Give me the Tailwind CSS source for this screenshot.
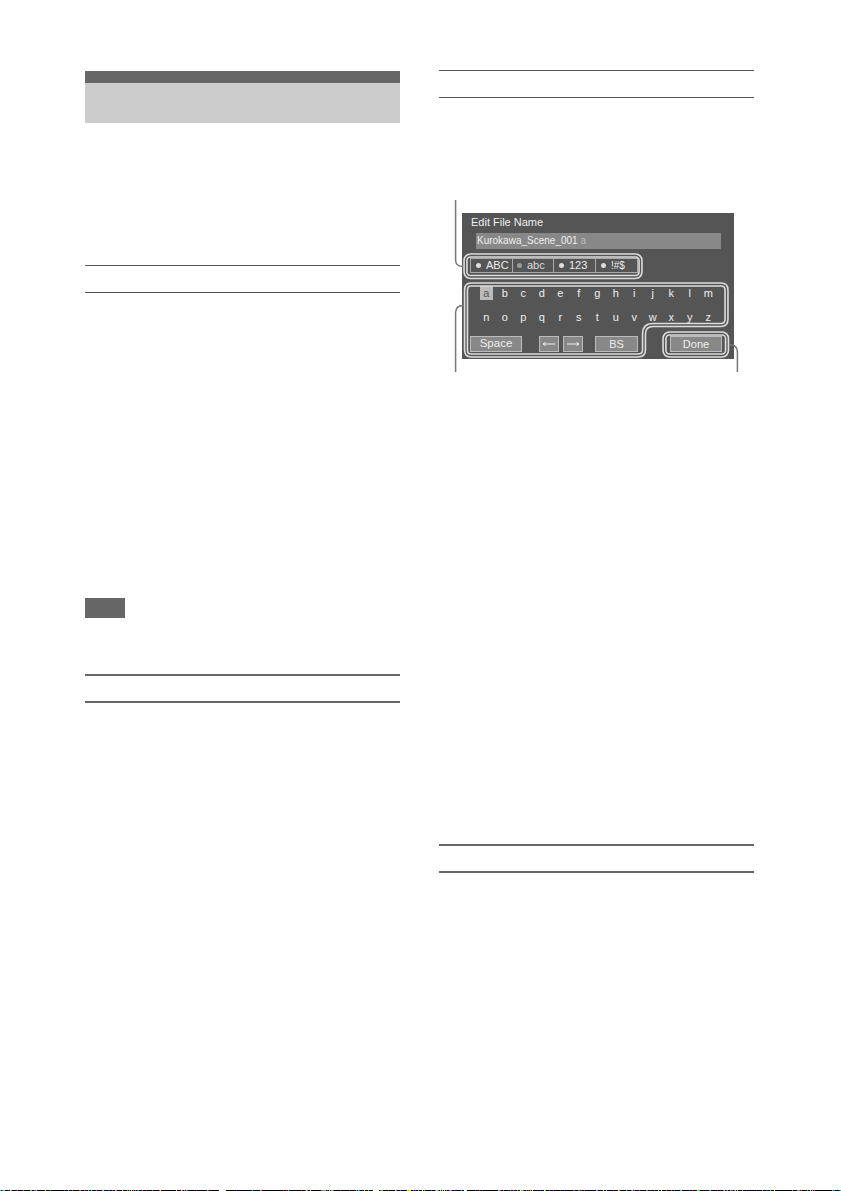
<!DOCTYPE html>
<html lang="en">
<head>
    <meta charset="UTF-8">
    <title>Edit File Name</title>
    <script src="https://cdn.jsdelivr.net/npm/@tailwindcss/browser@4"></script>
</head>
<body class="bg-white">
    <div class="h-[1191px] w-[841px] overflow-hidden flex flex-col font-['Liberation_Sans',sans-serif]">
        <div class="flex-1 flex">
            <!-- Left column -->
            <div class="ml-[85px] w-[315px]">
                <div class="mt-[71px] h-[12px] bg-[#666666]"></div>
                <div class="h-[40px] bg-[#cccccc]"></div>
                <div class="mt-[142px] h-px bg-[#555555]"></div>
                <div class="mt-[26px] h-px bg-[#555555]"></div>
                <div class="mt-[305px] h-[20px] w-[40px] bg-[#666666]"></div>
                <div class="mt-[56px] h-[2px] bg-[#666666]"></div>
                <div class="mt-[25px] h-[2px] bg-[#666666]"></div>
            </div>

            <!-- Right column -->
            <div class="ml-[39px] w-[315px]">
                <div class="mt-[70px] h-px bg-[#555555]"></div>
                <div class="mt-[26px] h-px bg-[#555555]"></div>

                <!-- Figure: keyboard screen with callouts -->
                <div class="relative mt-[92px] h-[190px] pt-[23px] pl-[23px]">
                    <div class="w-[272px] h-[146px] bg-[#555555] flex flex-col text-[#eeeeee] text-[11px]">
                        <div class="h-[18px] pl-[9px] leading-[18px] text-[11px]">Edit File Name</div>
                        <div class="mt-[2px] ml-[14px] w-[245px] h-[16px] bg-[#888888] pl-[1px] leading-[16px] text-[10px]">Kurokawa_Scene_001 <span class="text-[#bbbbbb]">a</span></div>

                        <!-- Character type tabs -->
                        <div class="mt-[9px] ml-[8px] w-[168px] h-[15px] flex border border-[#aaaaaa]">
                            <div class="w-[42px] flex items-center pl-[5px] gap-[5px] border-r border-[#aaaaaa]"><span class="w-[5px] h-[5px] rounded-full bg-[#dddddd]"></span><span>ABC</span></div>
                            <div class="w-[41px] flex items-center pl-[4px] gap-[5px] border-r border-[#aaaaaa]"><span class="w-[5px] h-[5px] rounded-full bg-[#999999]"></span><span class="text-[#dddddd]">abc</span></div>
                            <div class="w-[42px] flex items-center pl-[5px] gap-[5px] border-r border-[#aaaaaa]"><span class="w-[5px] h-[5px] rounded-full bg-[#dddddd]"></span><span>123</span></div>
                            <div class="flex-1 flex items-center pl-[5px] gap-[5px]"><span class="w-[5px] h-[5px] rounded-full bg-[#dddddd]"></span><span class="text-[10px]">!#$</span></div>
                        </div>

                        <!-- Letter keys -->
                        <div class="mt-[8px] ml-[15px] grid grid-cols-[repeat(13,18.5px)] grid-rows-[24px_24px] place-items-center text-[11px]">
                            <span class="w-[13px] h-[14px] bg-[#bbbbbb] text-[#555555] text-center leading-[14px]">a</span>
                            <span>b</span><span>c</span><span>d</span><span>e</span><span>f</span><span>g</span>
                            <span>h</span><span>i</span><span>j</span><span>k</span><span>l</span><span>m</span>
                            <span>n</span><span>o</span><span>p</span><span>q</span><span>r</span><span>s</span><span>t</span>
                            <span>u</span><span>v</span><span>w</span><span>x</span><span>y</span><span>z</span>
                        </div>

                        <!-- Bottom buttons -->
                        <div class="mt-[7px] ml-[8px] flex h-[16px] text-[11px]">
                            <div class="w-[52px] bg-[#888888] border border-[#bbbbbb] flex items-center justify-center text-[11.5px]">Space</div>
                            <div class="ml-[17px] w-[20px] bg-[#888888] border border-[#bbbbbb] flex items-center justify-center">
                                <svg width="14" height="6" viewBox="0 0 14 6"><path d="M1 3H13M1 3L3.5 1.5M1 3L3.5 4.5" fill="none" stroke="#eeeeee" stroke-width="1"/></svg>
                            </div>
                            <div class="ml-[4px] w-[20px] bg-[#888888] border border-[#bbbbbb] flex items-center justify-center">
                                <svg width="14" height="6" viewBox="0 0 14 6"><path d="M1 3H13M13 3L10.5 1.5M13 3L10.5 4.5" fill="none" stroke="#eeeeee" stroke-width="1"/></svg>
                            </div>
                            <div class="ml-[12px] w-[43px] bg-[#888888] border border-[#bbbbbb] flex items-center justify-center">BS</div>
                            <div class="ml-[32px] w-[52px] bg-[#888888] border border-[#bbbbbb] flex items-center justify-center">Done</div>
                        </div>
                    </div>

                    <!-- Callout outlines and leader lines, page coordinates -->
                    <svg class="absolute left-0 top-0" width="320" height="190" viewBox="439 190 320 190" fill="none">
                        <g stroke="#dddddd" stroke-width="4.5">
                            <rect x="465.5" y="255.5" width="175" height="21.5" rx="5"/>
                            <path d="M471 284.5H721Q726.5 284.5 726.5 290V319Q726.5 325 721 325H653Q644 325 644 334V350Q644 355.5 638 355.5H471Q466 355.5 466 350V290Q466 284.5 471 284.5Z"/>
                            <rect x="664.5" y="333.5" width="62.5" height="22" rx="5"/>
                        </g>
                        <g stroke="#555555" stroke-width="1.3">
                            <rect x="465.5" y="255.5" width="175" height="21.5" rx="5"/>
                            <path d="M471 284.5H721Q726.5 284.5 726.5 290V319Q726.5 325 721 325H653Q644 325 644 334V350Q644 355.5 638 355.5H471Q466 355.5 466 350V290Q466 284.5 471 284.5Z"/>
                            <rect x="664.5" y="333.5" width="62.5" height="22" rx="5"/>
                        </g>
                        <g stroke="#777777" stroke-width="1.5">
                            <path d="M455.6 200V260Q455.6 266.5 463 266.5"/>
                            <path d="M463 305.5Q455.6 305.5 455.6 313V372"/>
                            <path d="M729 344.5Q737.4 344.5 737.4 352V372"/>
                        </g>
                    </svg>
                </div>

                <div class="mt-[464px] h-[2px] bg-[#666666]"></div>
                <div class="mt-[25px] h-[2px] bg-[#666666]"></div>
            </div>
        </div>

        <!-- Scan noise along the bottom edge -->
        <div id="noise" class="h-px flex"></div>
    </div>

    <script>
        // Mostly black row with scattered coloured pixels and a few white gaps
        const colors = ['#ff2020', '#20e020', '#3030ff', '#ffe020', '#20e0e0', '#e020e0', '#808080'];
        const gaps = [[219, 226], [373, 379], [464, 467]];
        const noise = document.getElementById('noise');
        let seed = 7;
        for (let x = 0; x < 841; x++) {
            seed = (seed * 1103515245 + 12345) % 2147483648;
            const pick = seed % 100;
            const px = document.createElement('span');
            px.style.width = '1px';
            px.style.background = pick < 22 ? colors[(seed >> 8) % colors.length] : '#000000';
            if (gaps.some(g => x >= g[0] && x < g[1])) px.style.background = '#ffffff';
            noise.appendChild(px);
        }
    </script>
</body>
</html>
